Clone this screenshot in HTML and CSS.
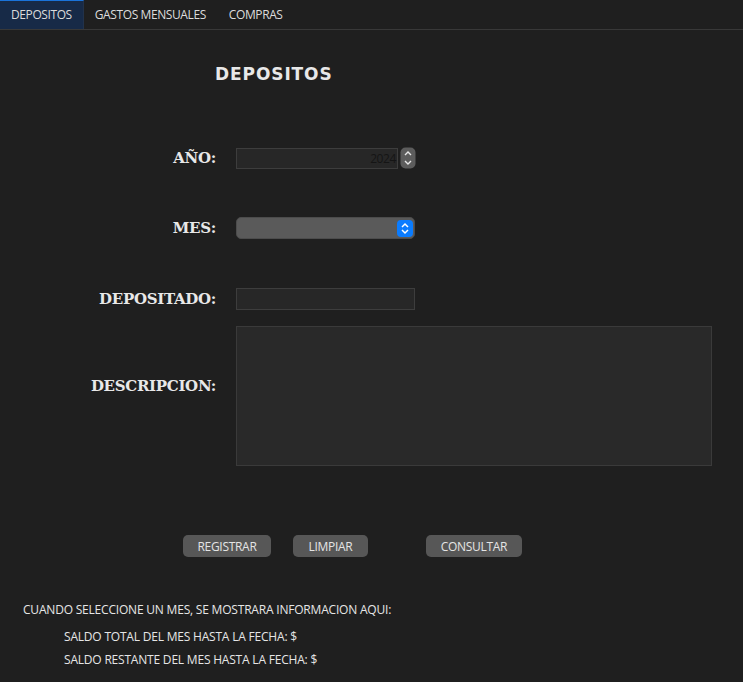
FILE: index.html
```html
<!DOCTYPE html>
<html lang="es">
<head>
<meta charset="utf-8">
<title>Depositos</title>
<link rel="stylesheet" href="styles.css">
</head>
<body>
<nav class="tabs">
  <div class="tab active">DEPOSITOS</div>
  <div class="tab">GASTOS MENSUALES</div>
  <div class="tab">COMPRAS</div>
</nav>
<main class="page">
  <h1 class="title">DEPOSITOS</h1>
  <div class="form">
    <label class="label row-anio">AÑO:</label>
    <div class="field row-anio">
      <div class="spin">
        <div class="spin-input">2024</div>
        <div class="spin-btn">
          <svg width="16" height="22" viewBox="0 0 16 22"><rect x="0.5" y="0.5" width="15" height="21" rx="5" fill="#5c5c5c"/><path d="M5 8 L8 5 L11 8" fill="none" stroke="#e8e8e8" stroke-width="1.4"/><path d="M5 14 L8 17 L11 14" fill="none" stroke="#e8e8e8" stroke-width="1.4"/></svg>
        </div>
      </div>
    </div>
    <label class="label row-mes">MES:</label>
    <div class="field row-mes">
      <div class="select">
        <span class="select-btn">
          <svg width="16" height="17" viewBox="0 0 16 17"><rect width="16" height="17" rx="4" fill="#0a7cff"/><path d="M5 7 L8 4 L11 7" fill="none" stroke="#fff" stroke-width="1.5"/><path d="M5 10 L8 13 L11 10" fill="none" stroke="#fff" stroke-width="1.5"/></svg>
        </span>
      </div>
    </div>
    <label class="label row-dep">DEPOSITADO:</label>
    <div class="field row-dep"><div class="text-input"></div></div>
    <label class="label row-desc">DESCRIPCION:</label>
    <div class="field row-desc"><div class="textarea"></div></div>
  </div>
  <div class="actions">
    <button class="btn">REGISTRAR</button>
    <button class="btn btn-limpiar">LIMPIAR</button>
    <button class="btn btn-consultar">CONSULTAR</button>
  </div>
  <section class="info">
    <p class="info-head">CUANDO SELECCIONE UN MES, SE MOSTRARA INFORMACION AQUI:</p>
    <p class="info-line">SALDO TOTAL DEL MES HASTA LA FECHA: $</p>
    <p class="info-line">SALDO RESTANTE DEL MES HASTA LA FECHA: $</p>
  </section>
</main>
</body>
</html>
```
FILE: styles.css
```css
html, body {
  margin: 0;
  padding: 0;
  background: #1f1f1f;
  color: #e6e6e6;
  height: 100%;
  overflow: hidden;
}
body {
  font-family: "Open Sans", "Noto Sans", sans-serif;
}
.tabs {
  display: flex;
  height: 29px;
  border-bottom: 1px solid #383838;
}
.tab {
  padding: 0 12px 0 11px;
  font-size: 12px;
  line-height: 29px;
  color: #dcdcdc;
  letter-spacing: -0.4px;
}
.tab.active {
  background: #172a47;
  border-top: 1px solid #1a73d9;
  line-height: 28px;
  border-right: 1px solid #22324a;
  padding-right: 11px;
}
.title {
  margin: 0;
  padding: 34px 0 0 215px;
  font-family: "DejaVu Sans", Verdana, sans-serif;
  font-weight: bold;
  font-size: 17px;
  line-height: 20px;
  color: #e8e8e8;
  letter-spacing: 0.9px;
}
.form {
  display: grid;
  grid-template-columns: 216px 475px;
  column-gap: 20px;
  margin-top: 63px;
}
.label {
  justify-self: end;
  align-self: center;
  font-family: "DejaVu Serif", "Liberation Serif", serif;
  font-weight: bold;
  font-size: 15px;
  color: #e8e8e8;
  letter-spacing: -0.3px;
}
.row-anio, .row-mes, .row-dep { height: 22px; }
.row-mes { margin-top: 48px; }
.row-dep { margin-top: 49px; }
.row-desc { margin-top: 16px; }
.label.row-anio, .label.row-mes, .label.row-dep { line-height: 22px; height: auto; }
.label.row-desc { padding-bottom: 20px; }
.spin {
  display: flex;
  align-items: center;
  gap: 2px;
  width: 180px;
}
.spin-input {
  width: 160px;
  height: 19px;
  background: #272727;
  border: 1px solid #3d3d3d;
  color: #151515;
  font-size: 12px;
  line-height: 19px;
  text-align: right;
  padding-right: 1px;
  letter-spacing: -0.4px;
}
.spin-btn { display: flex; height: 22px; }
.select {
  box-sizing: border-box;
  width: 179px;
  height: 22px;
  background: #5a5a5a;
  border: 1px solid #4c4c4c;
  border-radius: 5px;
  display: flex;
  justify-content: flex-end;
  align-items: center;
  padding-right: 1px;
}
.select-btn { display: flex; }
.text-input {
  box-sizing: border-box;
  width: 179px;
  height: 22px;
  background: #272727;
  border: 1px solid #3d3d3d;
}
.textarea {
  box-sizing: border-box;
  width: 476px;
  height: 140px;
  background: #292929;
  border: 1px solid #3a3a3a;
}
.actions {
  display: flex;
  margin: 69px 0 0 183px;
}
.btn {
  height: 22px;
  border: none;
  border-radius: 5px;
  background: #575757;
  color: #e4e4e4;
  font-family: "Open Sans", "Noto Sans", sans-serif;
  font-size: 12px;
  padding: 0;
  letter-spacing: -0.3px;
}
.btn:nth-child(1) { width: 88px; }
.btn-limpiar { width: 75px; margin-left: 22px; }
.btn-consultar { width: 96px; margin-left: 58px; }
.info {
  margin: 41px 0 0 23px;
  font-size: 12px;
  letter-spacing: -0.2px;
  color: #e6e6e6;
}
.info p { margin: 0; line-height: 23px; }
.info-head { margin-bottom: 4px !important; }
.info-line { padding-left: 41px; }
```
